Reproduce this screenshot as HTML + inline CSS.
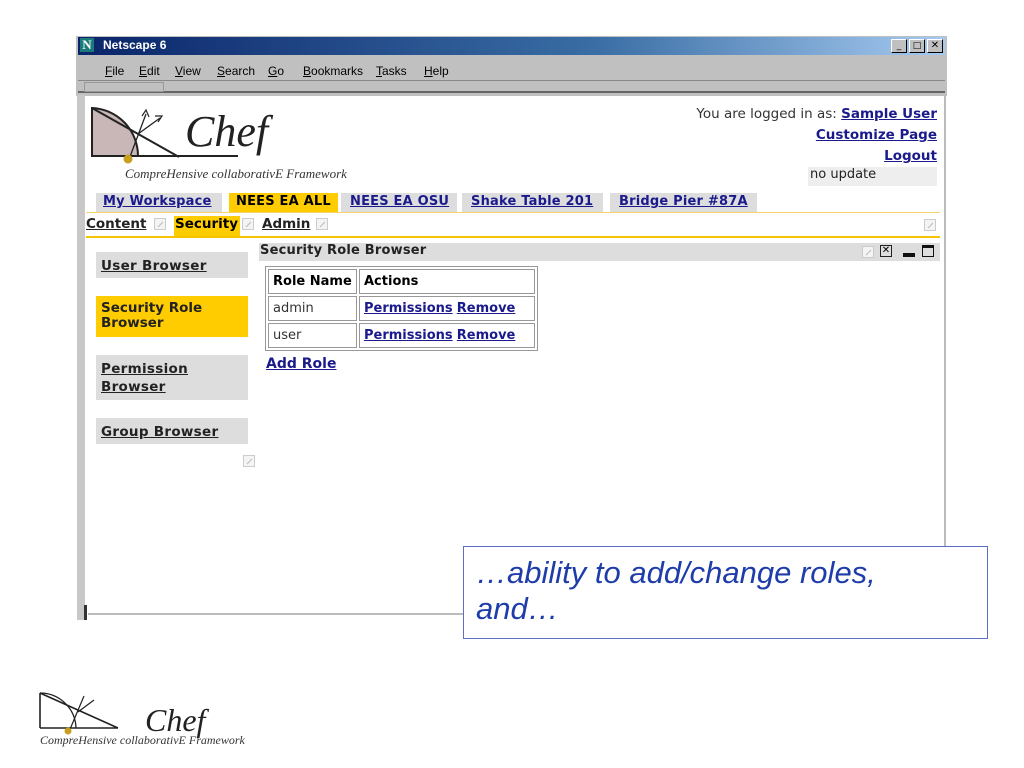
<!DOCTYPE html>
<html><head><style>
*{margin:0;padding:0;box-sizing:border-box}
body{width:1024px;height:768px;background:#fff;position:relative;overflow:hidden;font-family:"DejaVu Sans","Liberation Sans",sans-serif}
.a{position:absolute}
.b{font-weight:bold}
.lk{color:#1a1a8c;text-decoration:underline;font-weight:bold}
.tab{position:absolute;top:193px;height:19px;background:#ddd;font:bold 13px "DejaVu Sans",sans-serif;padding:1px 7px;white-space:nowrap;letter-spacing:.2px}
.pen{position:absolute;width:12px;height:12px;border:1px solid #ccc;background:#f4f4f4}
.pen:after{content:"";position:absolute;left:2px;top:5px;width:7px;height:1px;background:#bbb;transform:rotate(-45deg)}
.nav{position:absolute;left:96px;width:152px;background:#ddd;padding:6px 5px;font:bold 13.5px "DejaVu Sans",sans-serif;color:#222;text-decoration:underline;line-height:18px;letter-spacing:.3px}
td{border:1px solid #999;font-size:13px;padding:3px 4px;height:25px}
</style></head><body>
<div class="a" style="left:76px;top:36px;width:871px;height:60px;background:#c0c0c0"></div>
<div class="a" style="left:78px;top:37px;width:867px;height:18px;background:linear-gradient(90deg,#0a246a,#3a6ea5 60%,#a6caf0)"></div>
<div class="a" style="left:80px;top:38px;width:14px;height:14px;background:#1a7a7a;color:#fff;font:bold 13px 'Liberation Serif',serif;text-align:center;line-height:14px">N</div>
<div class="a" style="left:103px;top:38px;color:#fff;font:bold 12px 'Liberation Sans',sans-serif">Netscape 6</div>
<div class="a" style="left:891px;top:39px;width:52px;height:14px;display:flex;gap:2px">
<div style="width:16px;height:14px;background:#c0c0c0;border:1px solid;border-color:#fff #000 #000 #fff;font-size:9px;text-align:center;line-height:12px">_</div>
<div style="width:16px;height:14px;background:#c0c0c0;border:1px solid;border-color:#fff #000 #000 #fff;font-size:9px;text-align:center;line-height:12px">□</div>
<div style="width:16px;height:14px;background:#c0c0c0;border:1px solid;border-color:#fff #000 #000 #fff;font-size:10px;text-align:center;line-height:12px">✕</div></div>
<div class="a" style="left:78px;top:56px;width:867px;height:25px;background:#c0c0c0;border-bottom:1px solid #888"></div>
<div class="a" style="top:64px;left:0;font:12px 'Liberation Sans',sans-serif;color:#000;width:500px">
<span class="a" style="left:105px"><u>F</u>ile</span><span class="a" style="left:139px"><u>E</u>dit</span><span class="a" style="left:175px"><u>V</u>iew</span><span class="a" style="left:217px"><u>S</u>earch</span><span class="a" style="left:268px"><u>G</u>o</span><span class="a" style="left:303px"><u>B</u>ookmarks</span><span class="a" style="left:376px"><u>T</u>asks</span><span class="a" style="left:424px"><u>H</u>elp</span></div>
<div class="a" style="left:78px;top:82px;width:867px;height:11px;background:#c0c0c0;border-bottom:2px solid #666"></div>
<div class="a" style="left:84px;top:82px;width:80px;height:10px;border:1px solid #999"></div>
<div class="a" style="left:944px;top:95px;width:2px;height:452px;background:#bbb"></div>
<div class="a" style="left:77px;top:95px;width:8px;height:525px;background:#c8c8c8"></div>
<div class="a" style="left:84px;top:605px;width:3px;height:15px;background:#333"></div>
<div class="a" style="left:88px;top:613px;width:380px;height:2px;background:#bbb"></div>
<svg class="a" style="left:88px;top:104px" width="180" height="62" viewBox="0 0 180 62">
<path d="M4 4 A48 48 0 0 1 50 52 L4 52Z" fill="#c9b6b6" stroke="#222" stroke-width="2"/>
<path d="M4 4 L91 53" stroke="#222" stroke-width="2"/>
<path d="M4 52 L150 52" stroke="#222" stroke-width="2"/>
<path d="M40 58 L58 10 M50 30 L72 14" stroke="#222" stroke-width="1.3" fill="none"/>
<path d="M54 12 L58 6 L61 13 M67 12 L74 12 L70 18" stroke="#222" stroke-width="1.2" fill="none"/>
<circle cx="40" cy="55" r="4.5" fill="#c8a020"/>
</svg>
<div class="a" style="left:185px;top:106px;font:italic 44px 'Liberation Serif',serif;color:#222">Chef</div>
<div class="a" style="left:125px;top:166px;font:italic 13px 'Liberation Serif',serif;color:#333">CompreHensive collaborativE Framework</div>
<div class="a" style="right:87px;top:104px;text-align:right;line-height:21px;color:#333;font-size:13.5px">You are logged in as: <span class="lk">Sample User</span><br><span class="lk">Customize Page</span><br><span class="lk">Logout</span></div>
<div class="a" style="left:808px;top:167px;width:129px;height:19px;background:#eee;font-size:13px;padding:0 2px;color:#222">no update</div>
<div class="tab" style="left:96px;width:126px;padding-left:7px"><span class="lk">My Workspace</span></div>
<div class="tab" style="left:229px;width:109px;background:#fc0">NEES EA ALL</div>
<div class="tab" style="left:341px;width:116px;padding-left:9px"><span class="lk">NEES EA OSU</span></div>
<div class="tab" style="left:462px;width:141px;padding-left:9px"><span class="lk">Shake Table 201</span></div>
<div class="tab" style="left:610px;width:147px;padding-left:9px"><span class="lk">Bridge Pier #87A</span></div>
<div class="a" style="left:86px;top:212px;width:854px;height:1px;background:#f3d36a"></div>
<div class="a" style="left:86px;top:216px;font:bold 13.5px 'DejaVu Sans',sans-serif;color:#222;text-decoration:underline">Content</div>
<div class="pen" style="left:154px;top:218px"></div>
<div class="a" style="left:174px;top:216px;width:66px;height:20px;background:#fc0;font:bold 13.5px 'DejaVu Sans',sans-serif;padding:0 1px">Security</div>
<div class="pen" style="left:242px;top:218px"></div>
<div class="a" style="left:262px;top:216px;font:bold 13.5px 'DejaVu Sans',sans-serif;color:#222;text-decoration:underline">Admin</div>
<div class="pen" style="left:316px;top:218px"></div>
<div class="pen" style="left:924px;top:219px"></div>
<div class="a" style="left:86px;top:236px;width:854px;height:2px;background:#f5c400"></div>
<div class="nav" style="top:252px;height:26px;padding-top:5px">User Browser</div>
<div class="nav" style="top:296px;height:41px;background:#fc0;text-decoration:none;line-height:15px;padding-top:5px;letter-spacing:0">Security Role<br>Browser</div>
<div class="nav" style="top:355px;height:45px;padding-top:5px">Permission<br>Browser</div>
<div class="nav" style="top:418px;height:26px;padding-top:5px">Group Browser</div>
<div class="pen" style="left:243px;top:455px"></div>
<div class="a" style="left:259px;top:243px;width:681px;height:18px;background:#ddd;font:bold 13px 'DejaVu Sans',sans-serif;padding:0 1px;color:#222;letter-spacing:.2px">Security Role Browser</div>
<div class="pen" style="left:862px;top:246px"></div>
<div class="a" style="left:880px;top:245px;width:12px;height:12px;border:1px solid #222;font-size:10px;line-height:10px;text-align:center">✕</div>
<div class="a" style="left:903px;top:253px;width:12px;height:4px;background:#111"></div>
<div class="a" style="left:922px;top:245px;width:12px;height:12px;border:1px solid #111;border-top-width:3px"></div>
<table class="a" style="left:265px;top:266px;border:1px solid #999;border-spacing:2px;width:273px">
<tr><td class="b" style="width:89px">Role Name</td><td class="b">Actions</td></tr>
<tr><td style="color:#333">admin</td><td style="white-space:nowrap"><span class="lk">Permissions</span> <span class="lk">Remove</span></td></tr>
<tr><td style="color:#333">user</td><td style="white-space:nowrap"><span class="lk">Permissions</span> <span class="lk">Remove</span></td></tr>
</table>
<div class="a lk" style="left:266px;top:356px;font-size:14px">Add Role</div>
<div class="a" style="left:463px;top:546px;width:525px;height:93px;background:#fff;border:1px solid #5b6fc4;padding:8px 0 0 12px;font:italic 31px/36px 'Liberation Sans',sans-serif;color:#1e3caa">…ability to add/change roles,<br>and…</div>
<svg class="a" style="left:38px;top:690px" width="100" height="48" viewBox="0 0 100 48">
<path d="M2 3 L80 38 M2 38 L80 38 M2 3 L2 38" stroke="#222" stroke-width="1.6" fill="none"/>
<path d="M2 3 A36 36 0 0 1 38 38" stroke="#222" stroke-width="1.3" fill="none"/>
<path d="M30 44 L46 6 M40 22 L56 10" stroke="#222" stroke-width="1.2" fill="none"/>
<circle cx="30" cy="41" r="3.5" fill="#c8a020"/>
</svg>
<div class="a" style="left:145px;top:702px;font:italic 32px 'Liberation Serif',serif;color:#222">Chef</div>
<div class="a" style="left:40px;top:733px;font:italic 12px 'Liberation Serif',serif;color:#333;white-space:nowrap">CompreHensive collaborativE Framework</div>
</body></html>
